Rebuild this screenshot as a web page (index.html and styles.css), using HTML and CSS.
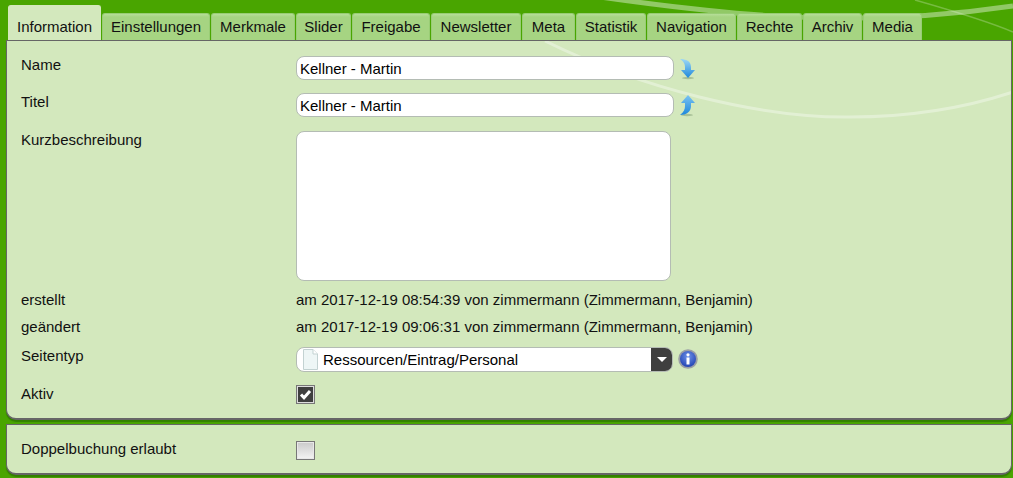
FILE: index.html
```html
<!DOCTYPE html>
<html lang="de">
<head>
<meta charset="utf-8">
<title>Information</title>
<link rel="stylesheet" href="styles.css">
</head>
<body>
<svg class="swoops" width="1013" height="478" viewBox="0 0 1013 478" fill="none">
  <path d="M600 -3 C 720 14, 850 30, 1013 6" stroke="#fff" stroke-opacity=".4" stroke-width="5"/>
  <path d="M915 0 C 950 10, 985 20, 1013 32" stroke="#fff" stroke-opacity=".25" stroke-width="1.500"/>
</svg>
<nav class="tabs">
  <a class="tab active">Information</a>
  <a class="tab">Einstellungen</a>
  <a class="tab">Merkmale</a>
  <a class="tab">Slider</a>
  <a class="tab">Freigabe</a>
  <a class="tab">Newsletter</a>
  <a class="tab">Meta</a>
  <a class="tab">Statistik</a>
  <a class="tab">Navigation</a>
  <a class="tab">Rechte</a>
  <a class="tab">Archiv</a>
  <a class="tab">Media</a>
</nav>
<main class="panel main-panel">
  <svg class="panel-swoop" width="1004" height="377" viewBox="7 41 1004 377" fill="none">
    <path d="M545 41 C 640 88, 760 118, 850 117 C 910 117, 965 108, 1013 92" stroke="#fff" stroke-opacity=".35" stroke-width="3"/>
  </svg>
  <div class="row row-name">
    <label class="lbl">Name</label>
    <input class="text" type="text" value="Kellner - Martin">
    <svg class="arrow" width="18" height="24" viewBox="0 0 18 24"><defs><linearGradient id="a" x1="0" y1="0" x2="0" y2="1"><stop offset="0" stop-color="#9ed8f4"/><stop offset="1" stop-color="#1e88dc"/></linearGradient></defs><ellipse cx="9" cy="22" rx="6" ry="1.200" fill="#7d9a72" fill-opacity=".5"/><path d="M1 3 C7 3 12 5 12 11 V14 H16 L9 22 L2 14 H6 V11 C6 8 5 6 1 3 Z" fill="url(#a)"/></svg>
  </div>
  <div class="row row-title">
    <label class="lbl">Titel</label>
    <input class="text" type="text" value="Kellner - Martin">
    <svg class="arrow" width="18" height="24" viewBox="0 0 18 24"><defs><linearGradient id="b" x1="0" y1="0" x2="0" y2="1"><stop offset="0" stop-color="#7cc4f2"/><stop offset="1" stop-color="#1e88dc"/></linearGradient></defs><ellipse cx="8" cy="22" rx="6" ry="1.200" fill="#7d9a72" fill-opacity=".5"/><path d="M1 22 C7 22 12 19 12 13 V10 H16 L9 2 L2 10 H6 V13 C6 16 5 19 1 22 Z" fill="url(#b)"/></svg>
  </div>
  <div class="row row-desc">
    <label class="lbl">Kurzbeschreibung</label>
    <textarea class="area"></textarea>
  </div>
  <div class="row row-info">
    <span class="lbl">erstellt</span>
    <span class="val">am 2017-12-19 08:54:39 von zimmermann (Zimmermann, Benjamin)</span>
  </div>
  <div class="row row-info">
    <span class="lbl">geändert</span>
    <span class="val">am 2017-12-19 09:06:31 von zimmermann (Zimmermann, Benjamin)</span>
  </div>
  <div class="row row-type">
    <label class="lbl">Seitentyp</label>
    <div class="select">
      <svg class="doc" width="17" height="21" viewBox="0 0 17 21"><path d="M1.500 .5 H11 L15.500 5 V20.500 H1.500 Z" fill="#eef6f6" stroke="#c3d2d2"/><path d="M11 .5 V5 H15.500" fill="#fff" stroke="#c3d2d2"/></svg>
      <span class="select-text">Ressourcen/Eintrag/Personal</span>
      <span class="select-btn"><i class="caret"></i></span>
    </div>
    <svg class="info" width="20" height="20" viewBox="0 0 20 20"><defs><radialGradient id="c" cx=".5" cy=".35" r=".7"><stop offset="0" stop-color="#6f93e8"/><stop offset="1" stop-color="#1c3eb0"/></radialGradient></defs><circle cx="10" cy="10" r="9.800" fill="#9a9fa5"/><circle cx="10" cy="10" r="8" fill="url(#c)"/><circle cx="10" cy="5.800" r="1.600" fill="#fff"/><rect x="8.500" y="8.500" width="3" height="7" fill="#fff"/></svg>
  </div>
  <div class="row row-check">
    <label class="lbl">Aktiv</label>
    <span class="check checked"><svg width="13" height="13" viewBox="0 0 13 13"><path d="M2 6.500 L5 9.800 L11 3" fill="none" stroke="#fff" stroke-width="3"/></svg></span>
  </div>
</main>
<section class="panel second-panel">
  <div class="row row-double">
    <label class="lbl">Doppelbuchung erlaubt</label>
    <span class="check"></span>
  </div>
</section>
</body>
</html>
```
FILE: styles.css
```css
* { box-sizing: border-box; }
html, body { margin: 0; height: 100%; overflow: hidden; }
body {
  position: relative;
  background: #49a500;
  font-family: "Liberation Sans", Arial, sans-serif;
  font-size: 15px;
  color: #111;
  padding: 5px 1px 0 6px;
}
.swoops { position: absolute; left: 0; top: 0; }
.tabs {
  position: relative;
  display: flex;
  align-items: flex-end;
  height: 35px;
  padding-left: 2px;
  gap: 1px;
}
.tab {
  flex: none;
  height: 27px;
  padding-top: 4px;
  text-align: center;
  background: linear-gradient(#b6de98, #a6d482 3px);
  border: 1px solid #98cd74;
  border-bottom: 0;
  border-radius: 3px 3px 0 0;
  white-space: nowrap;
}
.tab:nth-child(1) { width: 93px; }
.tab:nth-child(2) { width: 108px; }
.tab:nth-child(3) { width: 84px; }
.tab:nth-child(4) { width: 55px; }
.tab:nth-child(5) { width: 78px; }
.tab:nth-child(6) { width: 90px; }
.tab:nth-child(7) { width: 53px; }
.tab:nth-child(8) { width: 70px; }
.tab:nth-child(9) { width: 89px; }
.tab:nth-child(10) { width: 65px; }
.tab:nth-child(11) { width: 59px; }
.tab:nth-child(12) { width: 59px; }
.tab.active {
  height: 35px;
  padding-top: 12px;
  background: #d3e8bd;
  border-color: #d3e8bd;
}
.panel {
  position: relative;
  background: #d3e8bd;
  border: 1px solid #666;
  border-bottom-width: 2px;
  border-radius: 0 0 10px 10px;
  box-shadow: 0 2px 1px rgba(0, 40, 0, .3);
}
.panel-swoop { position: absolute; left: 0; top: 0; }
.main-panel { height: 380px; padding: 15px 14px 0; }
.second-panel {
  height: 51px;
  margin-top: 4px;
  padding: 15px 14px 0;
}
.row { position: relative; display: flex; align-items: flex-start; }
.lbl { flex: 0 0 275px; line-height: 17px; }
.text {
  width: 378px;
  height: 24px;
  padding: 0 3px;
  border: 1px solid #b4bcb4;
  border-radius: 8px;
  background: #fff;
  font: inherit;
  color: #000;
  outline: 0;
}
.arrow { margin-left: 5px; }
.row-name { height: 37px; }
.row-title { height: 38px; }
.row-desc { height: 160px; }
.area {
  width: 375px;
  height: 150px;
  border: 1px solid #b4bcb4;
  border-radius: 8px;
  background: #fff;
  resize: none;
  outline: 0;
}
.row-info { height: 27px; }
.val { line-height: 17px; }
.row-type { height: 40px; padding-top: 2px; }
.select {
  display: flex;
  align-items: center;
  width: 377px;
  height: 25px;
  border: 1px solid #b4bcb4;
  border-radius: 8px;
  background: #fff;
  overflow: hidden;
}
.doc { margin-left: 5px; flex: none; }
.select-text { flex: 1; margin-left: 4px; color: #000; }
.select-btn {
  display: flex;
  align-items: center;
  justify-content: center;
  flex: none;
  width: 21px;
  height: 100%;
  background: #3f3f3f;
}
.caret {
  width: 0;
  height: 0;
  border: 5px solid transparent;
  border-top: 5px solid #fff;
  border-bottom: 0;
}
.info { margin: 2px 0 0 5px; flex: none; }
.row-check { height: 23px; }
.check {
  display: flex;
  align-items: center;
  justify-content: center;
  width: 19px;
  height: 19px;
  margin-top: 1px;
  border: 1px solid #777;
  background: linear-gradient(#c9c9c9, #f4f4f4);
  box-shadow: inset 0 0 0 1px #e8e8e8;
}
.check.checked {
  margin-top: 0;
  background: #3f3f3f;
  box-shadow: inset 0 0 0 1px #ddd;
}
```
